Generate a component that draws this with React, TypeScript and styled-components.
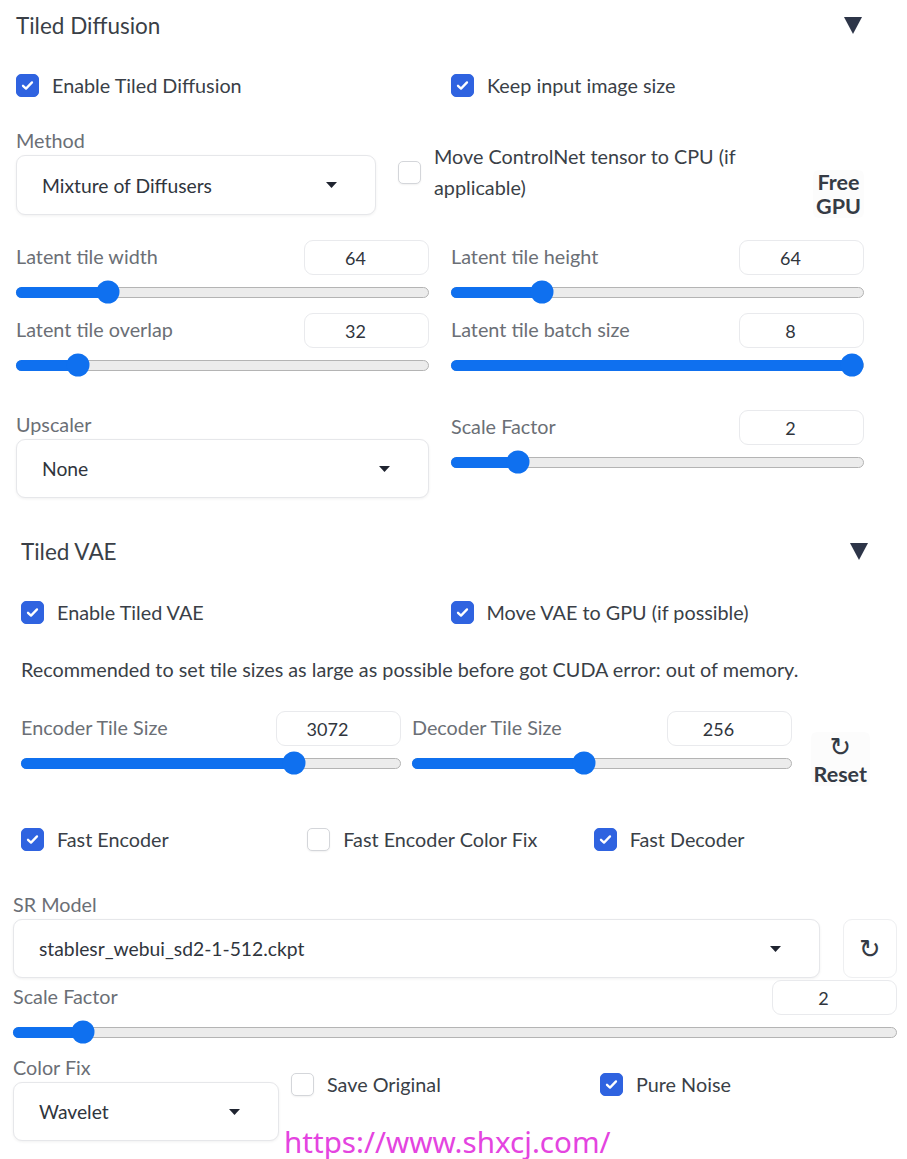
import React from "react";
import styled, { createGlobalStyle } from "styled-components";

const GlobalStyle = createGlobalStyle`
    body {
        margin: 0;
        background: #ffffff;
        font-family: Lato, "Noto Sans", sans-serif;
        color: #374151;
    }
`;

const BLUE = "#0f70ef";
const TEXT = 19.8;

// ---------- small parts ----------

const Page = styled.div`
    width: 907px;
    height: 1159px;
    overflow: hidden;
    position: relative;
`;

const Section = styled.section<{ $left: number; $right: number }>`
    display: flex;
    flex-direction: column;
    padding: 0 ${(p) => p.$right}px 0 ${(p) => p.$left}px;
`;

const Header = styled.div<{ $mt?: number }>`
    display: flex;
    align-items: center;
    justify-content: space-between;
    height: 50px;
    margin-top: ${(p) => p.$mt ?? 0}px;
`;

const Title = styled.h2`
    margin: 0;
    font-size: 22.5px;
    font-weight: 400;
    color: #3a3f47;
`;

const Caret = styled.svg`
    width: 18px;
    height: 17px;
    margin-right: 2px;
    fill: #2d3548;
`;

const Grid2 = styled.div<{ $mt?: number; $gap?: number }>`
    display: grid;
    grid-template-columns: 1fr 1fr;
    column-gap: ${(p) => p.$gap ?? 22}px;
    row-gap: 4px;
    align-items: start;
    margin-top: ${(p) => p.$mt ?? 0}px;
`;

const Grid3 = styled.div<{ $mt?: number; $cols: string; $gap: number }>`
    display: grid;
    grid-template-columns: ${(p) => p.$cols};
    column-gap: ${(p) => p.$gap}px;
    align-items: start;
    margin-top: ${(p) => p.$mt ?? 0}px;
    position: relative;
`;

const CheckLabel = styled.label<{ $mt?: number; $maxw?: number; $lh?: number }>`
    display: flex;
    align-items: center;
    gap: 13px;
    font-size: ${TEXT}px;
    line-height: ${(p) => p.$lh ?? 24}px;
    color: #3a3f47;
    margin-top: ${(p) => p.$mt ?? 0}px;
    span.text {
        max-width: ${(p) => (p.$maxw ? p.$maxw + "px" : "none")};
    }
`;

const Box = styled.span<{ $checked: boolean }>`
    flex: none;
    width: 23px;
    height: 23px;
    box-sizing: border-box;
    border-radius: 5px;
    display: flex;
    align-items: center;
    justify-content: center;
    background: ${(p) => (p.$checked ? "#2f63e0" : "#ffffff")};
    border: 1px solid ${(p) => (p.$checked ? "#2f63e0" : "#d4d6da")};
    box-shadow: ${(p) => (p.$checked ? "none" : "0 1px 2px rgba(0,0,0,0.06)")};
`;

const FieldLabel = styled.div`
    font-size: ${TEXT}px;
    line-height: 24px;
    color: #6b6f76;
`;

const Column = styled.div<{ $w?: number; $mt?: number }>`
    display: flex;
    flex-direction: column;
    gap: 3px;
    width: ${(p) => (p.$w ? p.$w + "px" : "auto")};
    flex: ${(p) => (p.$w ? "none" : "1")};
    margin-top: ${(p) => p.$mt ?? 0}px;
`;

const Dropdown = styled.div<{ $h?: number }>`
    height: ${(p) => p.$h ?? 60}px;
    box-sizing: border-box;
    display: flex;
    align-items: center;
    justify-content: space-between;
    padding: 0 38px 0 25px;
    background: #fff;
    border: 1px solid #e6e7ea;
    border-radius: 9px;
    box-shadow: 0 1px 3px rgba(0, 0, 0, 0.06);
    font-size: 19.3px;
    color: #30353d;
`;

const DropArrow = styled.svg`
    width: 11px;
    height: 6px;
    fill: #1f2430;
`;

const Row = styled.div<{ $mt?: number; $gap?: number }>`
    display: flex;
    align-items: flex-start;
    gap: ${(p) => p.$gap ?? 22}px;
    margin-top: ${(p) => p.$mt ?? 0}px;
`;

const ToolButton = styled.div<{ $mt?: number; $mb?: number }>`
    flex: none;
    display: flex;
    flex-direction: column;
    align-items: center;
    font-size: 21.5px;
    font-weight: 700;
    line-height: 24px;
    color: #353b45;
    background: #fcfcfc;
    border-radius: 6px;
    padding: 0 3px;
    margin-top: ${(p) => p.$mt ?? 0}px;
    margin-bottom: ${(p) => p.$mb ?? 0}px;
    margin-left: auto;
`;

const RefreshIcon = styled.span<{ $size: number }>`
    display: block;
    font-family: "DejaVu Sans", sans-serif;
    font-weight: 400;
    font-size: ${(p) => p.$size}px;
    line-height: ${(p) => p.$size + 4}px;
`;

const IconButton = styled.div`
    flex: none;
    width: 54px;
    height: 59px;
    box-sizing: border-box;
    display: flex;
    align-items: center;
    justify-content: center;
    border: 1px solid #eeeff1;
    border-radius: 9px;
    background: #fff;
    color: #353b45;
`;

const SliderWrap = styled.div<{ $w?: number; $mt?: number }>`
    display: flex;
    flex-direction: column;
    width: ${(p) => (p.$w ? p.$w + "px" : "auto")};
    flex: ${(p) => (p.$w ? "none" : "1")};
    margin-top: ${(p) => p.$mt ?? 0}px;
`;

const SliderHead = styled.div`
    display: flex;
    align-items: center;
    justify-content: space-between;
    height: 35px;
`;

const SliderName = styled(FieldLabel)`
    padding-bottom: 4px;
`;

const NumberBox = styled.div`
    width: 125px;
    height: 35px;
    box-sizing: border-box;
    display: flex;
    align-items: center;
    justify-content: center;
    padding-right: 22px;
    border: 1px solid #e9eaed;
    border-radius: 9px;
    font-size: 18px;
    color: #30353d;
    background: #fff;
`;

const TrackArea = styled.div`
    height: 34px;
    display: flex;
    align-items: center;
`;

const Track = styled.div`
    position: relative;
    flex: 1;
    height: 11px;
    box-sizing: border-box;
    border-radius: 6px;
    background: #ececec;
    border: 1px solid #b4b4b4;
`;

const Fill = styled.div`
    position: absolute;
    left: -1px;
    top: -1px;
    bottom: -1px;
    border-radius: 6px;
    background: ${BLUE};
`;

const Thumb = styled.div`
    position: absolute;
    top: 50%;
    width: 23px;
    height: 23px;
    border-radius: 50%;
    background: ${BLUE};
    transform: translate(-50%, -50%);
`;

const InfoText = styled.p`
    margin: 33px 0 0;
    font-size: ${TEXT}px;
    line-height: 24px;
    color: #3a3f47;
`;

const Watermark = styled.div`
    position: absolute;
    left: 271px;
    top: 73px;
    font-family: "Noto Sans", sans-serif;
    font-size: 29.6px;
    line-height: 28px;
    color: #e444e0;
    white-space: nowrap;
`;

// ---------- components ----------

function Check({ checked, label, mt, maxw, lh }: { checked: boolean; label: string; mt?: number; maxw?: number; lh?: number }) {
    return (
        <CheckLabel $mt={mt} $maxw={maxw} $lh={lh}>
            <Box $checked={checked}>
                {checked && (
                    <svg width="13" height="11" viewBox="0 0 13 11">
                        <polyline points="2,5.8 5,8.6 11,2.4" fill="none" stroke="#fff" strokeWidth="2.3" strokeLinecap="round" strokeLinejoin="round" />
                    </svg>
                )}
            </Box>
            <span className="text">{label}</span>
        </CheckLabel>
    );
}

function Select({ value, h }: { value: string; h?: number }) {
    return (
        <Dropdown $h={h}>
            <span>{value}</span>
            <DropArrow viewBox="0 0 11 6">
                <polygon points="0,0 11,0 5.5,6" />
            </DropArrow>
        </Dropdown>
    );
}

function Slider({ label, value, pos, w, mt }: { label: string; value: string; pos: number; w?: number; mt?: number }) {
    const at = `calc(11.5px + ${pos} * (100% - 23px))`;
    return (
        <SliderWrap $w={w} $mt={mt}>
            <SliderHead>
                <SliderName>{label}</SliderName>
                <NumberBox>{value}</NumberBox>
            </SliderHead>
            <TrackArea>
                <Track>
                    <Fill style={{ width: at }} />
                    <Thumb style={{ left: at }} />
                </Track>
            </TrackArea>
        </SliderWrap>
    );
}

function SectionHeader({ title, mt }: { title: string; mt?: number }) {
    return (
        <Header $mt={mt}>
            <Title>{title}</Title>
            <Caret viewBox="0 0 18 17">
                <polygon points="0,0 18,0 9,17" />
            </Caret>
        </Header>
    );
}

export default function App() {
    return (
        <Page>
            <GlobalStyle />

            <Section $left={16} $right={43}>
                <SectionHeader title="Tiled Diffusion" />
                <Grid2 $mt={23}>
                    <Check checked label="Enable Tiled Diffusion" />
                    <Check checked label="Keep input image size" />
                </Grid2>

                <Row $mt={31}>
                    <Column $w={360}>
                        <FieldLabel>Method</FieldLabel>
                        <Select value="Mixture of Diffusers" />
                    </Column>
                    <Check checked={false} mt={13} lh={31} maxw={350} label="Move ControlNet tensor to CPU (if applicable)" />
                    <ToolButton $mt={42} $mb={-3}>
                        <span>Free</span>
                        <span>GPU</span>
                    </ToolButton>
                </Row>

                <Grid2 $mt={25}>
                    <Slider label="Latent tile width" value="64" pos={0.205} />
                    <Slider label="Latent tile height" value="64" pos={0.202} />
                    <Slider label="Latent tile overlap" value="32" pos={0.128} />
                    <Slider label="Latent tile batch size" value="8" pos={1} />
                </Grid2>

                <Grid2 $mt={30}>
                    <Column>
                        <FieldLabel>Upscaler</FieldLabel>
                        <Select value="None" h={59} />
                    </Column>
                    <Slider label="Scale Factor" value="2" pos={0.141} mt={-2} />
                </Grid2>
            </Section>

            <Section $left={21} $right={37}>
                <SectionHeader title="Tiled VAE" mt={28} />
                <Grid2 $mt={24} $gap={10}>
                    <Check checked label="Enable Tiled VAE" />
                    <Check checked label="Move VAE to GPU (if possible)" />
                </Grid2>

                <InfoText>Recommended to set tile sizes as large as possible before got CUDA error: out of memory.</InfoText>

                <Row $mt={30} $gap={11}>
                    <Slider label="Encoder Tile Size" value="3072" pos={0.735} w={380} />
                    <Slider label="Decoder Tile Size" value="256" pos={0.45} w={380} />
                    <ToolButton $mt={21}>
                        <RefreshIcon $size={26}>↻</RefreshIcon>
                        <span>Reset</span>
                    </ToolButton>
                </Row>

                <Grid3 $mt={41} $cols="1fr 1fr 1fr" $gap={10}>
                    <Check checked label="Fast Encoder" />
                    <Check checked={false} label="Fast Encoder Color Fix" />
                    <Check checked label="Fast Decoder" />
                </Grid3>
            </Section>

            <Section $left={13} $right={10}>
                <Column $mt={41}>
                    <FieldLabel>SR Model</FieldLabel>
                    <Row $gap={23}>
                        <Column>
                            <Select value="stablesr_webui_sd2-1-512.ckpt" h={59} />
                        </Column>
                        <IconButton>
                            <RefreshIcon $size={26}>↻</RefreshIcon>
                        </IconButton>
                    </Row>
                </Column>

                <Slider label="Scale Factor" value="2" pos={0.067} mt={2} />

                <Grid3 $mt={6} $cols="266px 1fr 1fr" $gap={12}>
                    <Column $w={266}>
                        <FieldLabel>Color Fix</FieldLabel>
                        <Select value="Wavelet" h={59} />
                    </Column>
                    <Check checked={false} mt={17} label="Save Original" />
                    <Check checked mt={17} label="Pure Noise" />
                    <Watermark>https://www.shxcj.com/</Watermark>
                </Grid3>
            </Section>
        </Page>
    );
}
